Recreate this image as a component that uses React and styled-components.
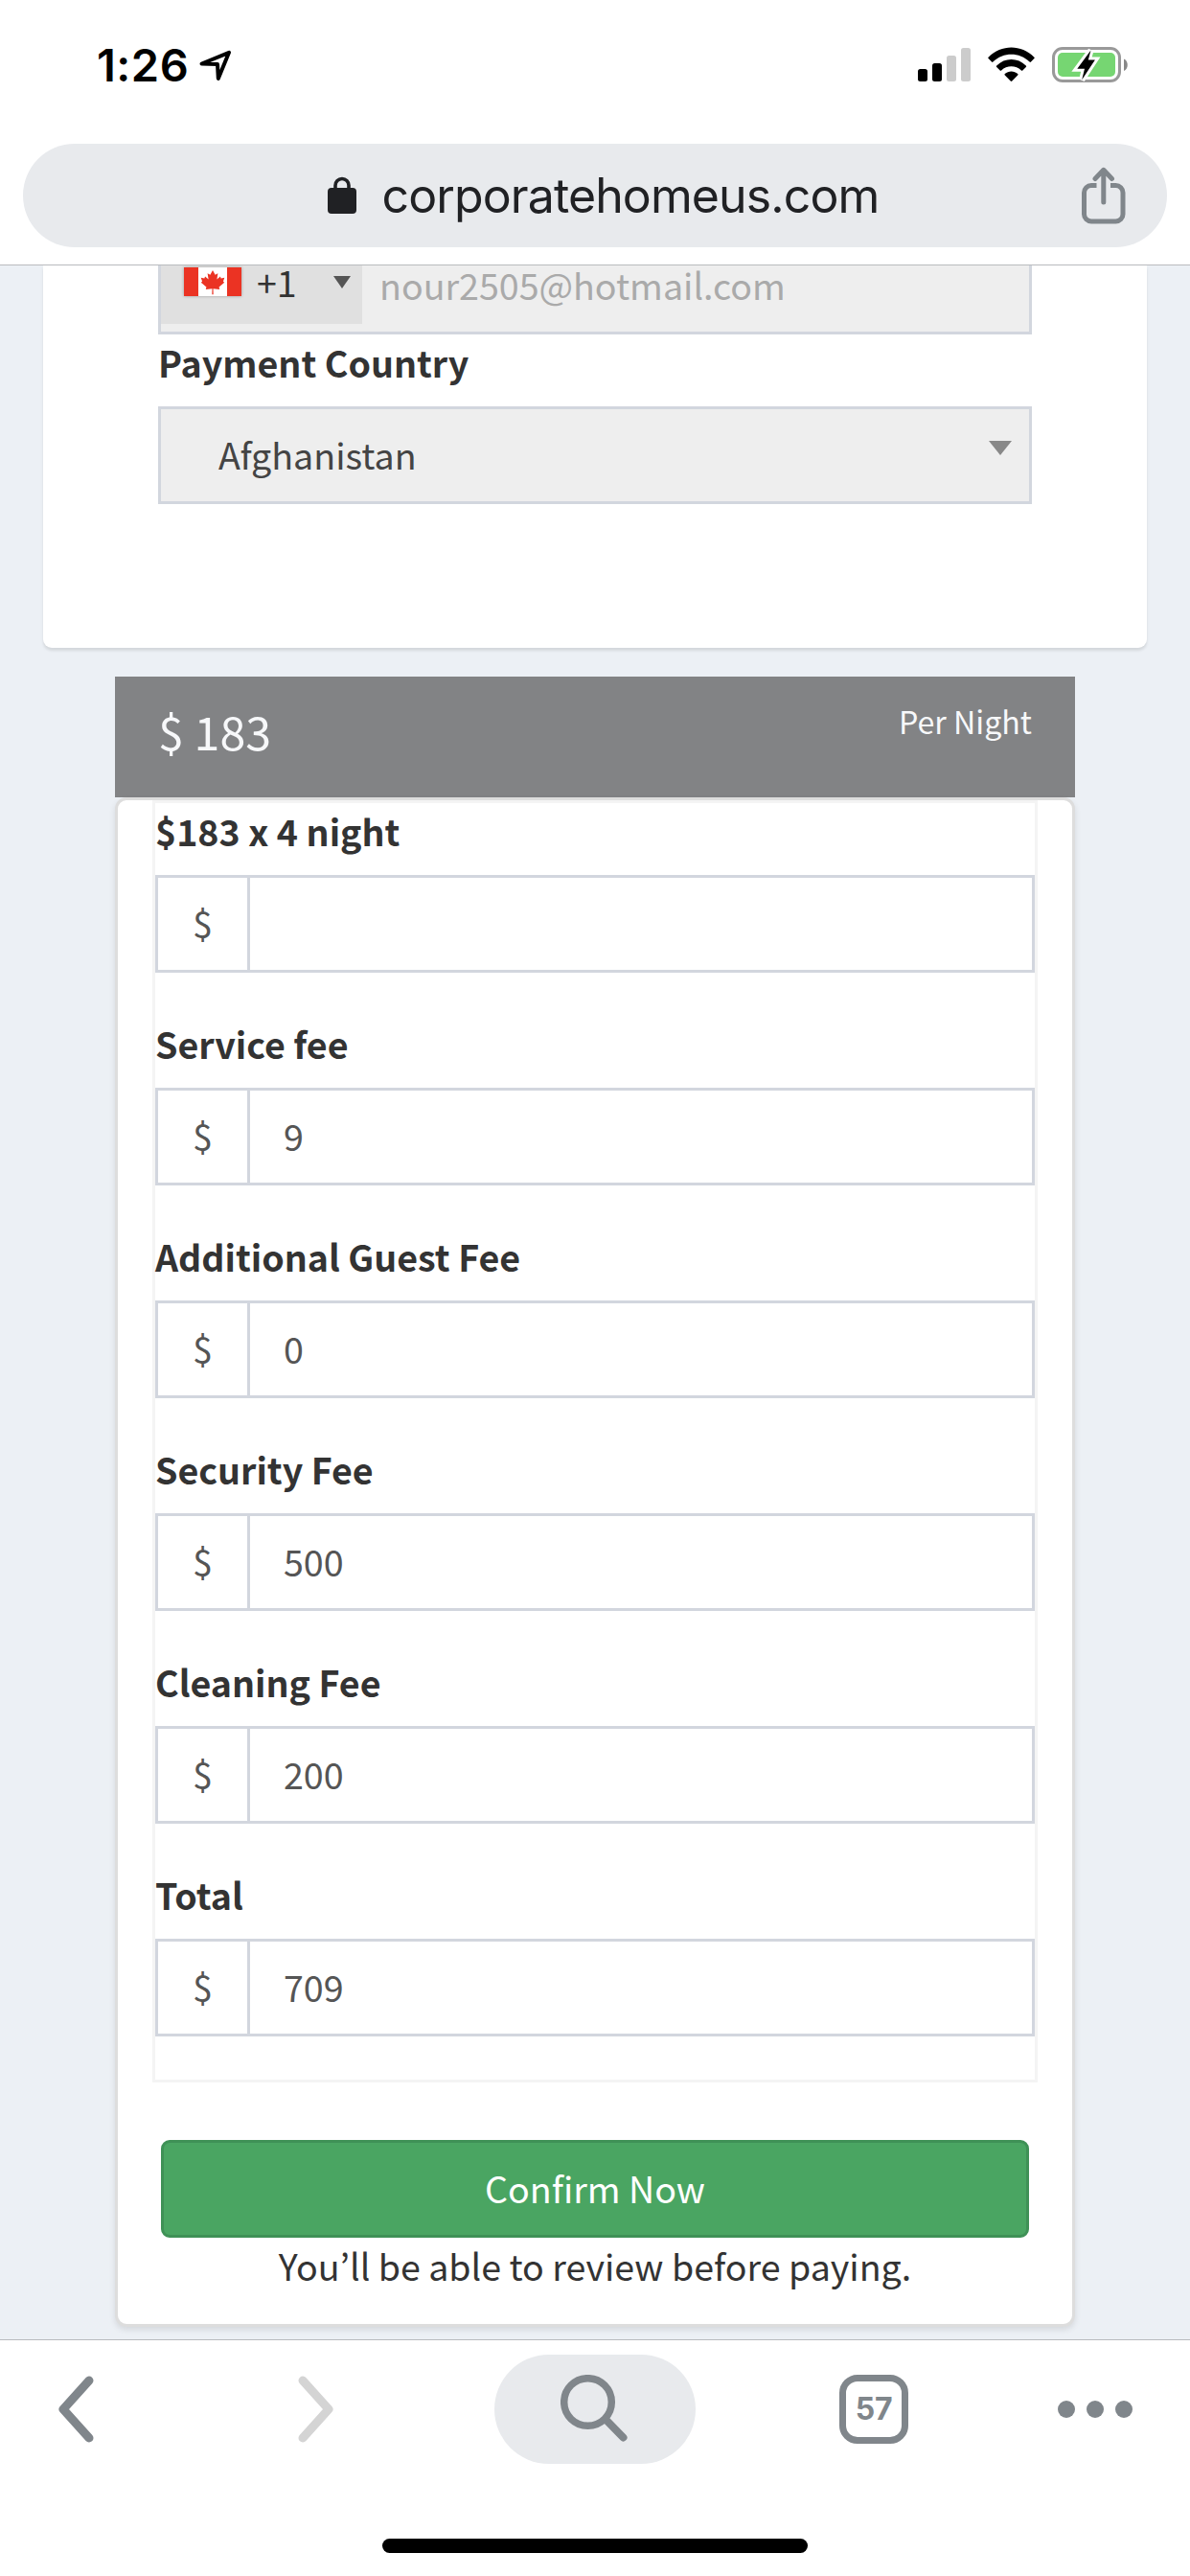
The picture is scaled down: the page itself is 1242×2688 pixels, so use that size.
import React from "react";
import styled, { createGlobalStyle } from "styled-components";

const GlobalStyle = createGlobalStyle`
  * { box-sizing: border-box; }
  body { margin: 0; background: #fff; }
  input, button, select { font: inherit; }
`;

const ui = `Inter, "Liberation Sans", sans-serif`;
const body = `"Noto Sans CJK KR", "Noto Sans", sans-serif`;

const Screen = styled.div`
  width: 1242px;
  height: 2688px;
  display: flex;
  flex-direction: column;
  overflow: hidden;
  background: #fff;
`;

const StatusBar = styled.header`
  height: 150px;
  flex: none;
  display: flex;
  justify-content: space-between;
  align-items: flex-start;
  padding: 44px 65px 0 101px;
`;

const TimeGroup = styled.div`
  display: flex;
  align-items: center;
  gap: 10px;
  height: 48px;
`;

const Time = styled.span`
  font: 600 47px/48px ${ui};
  letter-spacing: 0.5px;
  color: #000;
`;

const StatusIcons = styled.div`
  display: flex;
  align-items: flex-start;
  gap: 18px;
  padding-top: 5px;
  svg { display: block; }
`;

const AddressArea = styled.div`
  height: 127px;
  flex: none;
  padding: 0 24px;
  border-bottom: 1px solid #b9bbbe;
`;

const AddressBar = styled.div`
  height: 108px;
  border-radius: 54px;
  background: #e8eaed;
  display: grid;
  grid-template-columns: 1fr auto 1fr;
  align-items: center;
  padding: 0 43px 0 0;
`;

const Address = styled.div`
  grid-column: 2;
  display: flex;
  align-items: center;
  gap: 27px;
  padding-left: 60px;
`;

const Domain = styled.span`
  font: 400 50px/60px ${ui};
  letter-spacing: -0.9px;
  color: #202124;
`;

const ShareButton = styled.div`
  justify-self: end;
  display: flex;
`;

const Page = styled.main`
  height: 2164px;
  flex: none;
  overflow: hidden;
  background: #ecf0f5;
  font-family: ${body};
  color: #333;
`;

const ContactCard = styled.section`
  height: 399px;
  margin: 0 45px 30px;
  padding: 0 120px;
  background: #fff;
  border-radius: 0 0 9px 9px;
  box-shadow: 0 3px 3px rgba(0, 0, 0, 0.1);
`;

const PhoneField = styled.div`
  height: 72px;
  display: flex;
  align-items: flex-start;
  background: #eee;
  border: 3px solid #d2d6de;
  border-top: 0;
`;

const DialCode = styled.div`
  width: 210px;
  height: 61px;
  padding: 2px 12px 0 24px;
  display: flex;
  align-items: flex-start;
  background: #e0e0e0;
  font-size: 37.6px;
  line-height: 38px;
  svg {
    display: block;
    box-shadow: 0 0 3px rgba(0, 0, 0, 0.3);
  }
`;

const Code = styled.span`
  margin: -4px 0 0 16px;
  flex: 1;
`;

const Caret = styled.span`
  width: 0;
  height: 0;
  margin-top: ${(p) => p.$top}px;
  border: ${(p) => p.$half}px solid transparent;
  border-top: ${(p) => p.$tall}px solid ${(p) => p.$color};
  border-bottom: 0;
`;

const Placeholder = styled.span`
  padding-left: 18px;
  font-size: 37.6px;
  line-height: 40px;
  color: #aaa;
`;

const Label = styled.label`
  display: block;
  height: 75px;
  padding-top: 1px;
  font-size: 37.6px;
  line-height: 56px;
  font-weight: 700;
  color: #333;
`;

const CountrySelect = styled.div`
  height: 102px;
  display: flex;
  justify-content: space-between;
  align-items: flex-start;
  padding: 0 18px 0 60px;
  background: #eee;
  border: 3px solid #d2d6de;
  font-size: 37.6px;
  line-height: 94px;
  color: #444;
`;

const Quote = styled.section`
  width: 1002px;
  margin: 0 auto;
`;

const PriceBar = styled.div`
  height: 126px;
  display: flex;
  justify-content: space-between;
  align-items: flex-start;
  padding: 0 45px;
  background: #828385;
  color: #f7f8fa;
`;

const Price = styled.span`
  padding-top: 20px;
  font-size: 48.3px;
  line-height: 72px;
`;

const Unit = styled.span`
  padding-top: 22px;
  font-size: 32.2px;
  line-height: 48px;
`;

const FeeCard = styled.div`
  height: 1596px;
  padding: 0 36px;
  background: #fff;
  border: 3px solid #ddd;
  border-radius: 12px;
  box-shadow: 0 3px 6px rgba(0, 0, 0, 0.1);
`;

const FeeBox = styled.div`
  height: 1338px;
  border: 3px solid #f4f4f4;
`;

const Fee = styled.div`
  padding-bottom: 45px;
`;

const MoneyField = styled.div`
  height: 102px;
  display: flex;
  border: 3px solid #d2d6de;
  font-size: 37.6px;
  line-height: 94px;
  color: #555;
`;

const Currency = styled.span`
  width: 96px;
  border-right: 3px solid #d2d6de;
  text-align: center;
`;

const Amount = styled.span`
  padding-left: 35px;
`;

const Actions = styled.div`
  padding: 60px 9px 0;
  text-align: center;
  font-size: 37.6px;
`;

const ConfirmButton = styled.button`
  display: block;
  width: 100%;
  height: 102px;
  padding: 0 0 3px;
  background: #4aa562;
  border: 3px solid #3f9156;
  border-radius: 9px;
  color: #fff;
  font-size: 37.6px;
  line-height: 90px;
`;

const Hint = styled.p`
  margin: 1px 0 0;
  line-height: 56px;
`;

const Toolbar = styled.nav`
  height: 247px;
  flex: none;
  border-top: 1px solid #b9bbbe;
  display: flex;
  flex-direction: column;
  align-items: center;
  background: #fff;
`;

const ToolRow = styled.div`
  width: 100%;
  height: 114px;
  margin: 15px 0 78px;
  display: grid;
  grid-template-columns: 251px 205px 360px 228px 79px;
  align-items: center;
  justify-items: start;
  padding-left: 60px;
  svg { display: block; }
`;

const SearchPill = styled.div`
  width: 210px;
  height: 114px;
  border-radius: 57px;
  background: #e8eaed;
  display: flex;
  align-items: center;
  justify-content: center;
`;

const Tabs = styled.div`
  width: 72px;
  height: 72px;
  display: flex;
  align-items: center;
  justify-content: center;
  border: 7px solid #80868b;
  border-radius: 19px;
  font: 700 32px/34px ${ui};
  letter-spacing: -0.4px;
  color: #80868b;
`;

const HomeIndicator = styled.div`
  width: 444px;
  height: 15px;
  border-radius: 8px;
  background: #000;
`;

const LocationIcon = () => (
  <svg width="36" height="34" viewBox="0 0 36 34" fill="none">
    <path d="M3.500 15.500 32 3.800 20.800 31 20 16Z" stroke="#000" strokeWidth="4" strokeLinejoin="round" />
  </svg>
);

const SignalIcon = () => (
  <svg width="55" height="37" viewBox="0 0 55 37">
    <rect x="0" y="23" width="10" height="13" rx="2.5" />
    <rect x="15" y="17" width="10" height="19" rx="2.5" />
    <rect x="30" y="9" width="10" height="27" rx="2.5" fill="#ccc" />
    <rect x="45" y="1" width="10" height="35" rx="2.5" fill="#ccc" />
  </svg>
);

const WifiIcon = () => (
  <svg width="49" height="37" viewBox="0 0 49 37">
    <path d="M0.6 12.1a1 1 0 0 1 0-1.4C14-3 35-3 48.400 10.700a1 1 0 0 1 0 1.400L45 15.600a1 1 0 0 1-1.400 0C33 5.200 16 5.200 5.400 15.600a1 1 0 0 1-1.400 0Z" />
    <path d="M9.200 20.900a1 1 0 0 1 0-1.500c8.600-8.600 22-8.600 30.600 0a1 1 0 0 1 0 1.500l-3.500 3.500a1 1 0 0 1-1.400 0c-5.800-5.600-15-5.600-20.800 0a1 1 0 0 1-1.400 0Z" />
    <path d="M17.800 29.600a1 1 0 0 1 0-1.500c3.700-3.600 9.700-3.600 13.400 0a1 1 0 0 1 0 1.500l-5.900 6a1.100 1.100 0 0 1-1.600 0Z" />
  </svg>
);

const BatteryIcon = () => (
  <svg width="79" height="37" viewBox="0 0 79 37">
    <rect x="1.500" y="1.500" width="69" height="34" rx="9.500" fill="none" stroke="#999" strokeWidth="3" />
    <path d="M75 12.500c5 2 5 10.500 0 12.500Z" fill="#888" />
    <rect x="6" y="6" width="60" height="25" rx="5" fill="#76d672" />
    <path d="M40.500 3.500 26.300 22.700H34L31.200 34.300 44.900 13.400H37.800Z" fill="#000" stroke="#fff" strokeWidth="6" paintOrder="stroke" />
  </svg>
);

const LockIcon = () => (
  <svg width="30" height="40" viewBox="0 0 30 40">
    <path d="M8 14V9.500a7 7 0 0 1 14 0V14" fill="none" stroke="#202124" strokeWidth="3.600" />
    <rect x="0" y="12" width="30" height="27" rx="4" fill="#202124" />
  </svg>
);

const ShareIcon = () => (
  <svg width="46" height="60" viewBox="0 0 46 60" fill="none" stroke="#80868b" strokeWidth="5">
    <path d="M15.500 19.500H10a7.500 7.500 0 0 0-7.500 7.500V49.500A7.500 7.500 0 0 0 10 57H35.500A7.500 7.500 0 0 0 43 49.500V27a7.500 7.500 0 0 0-7.500-7.500H30" />
    <path d="M22.800 3.500V37M14 12.500 22.800 3.300 31.500 12.500" strokeLinecap="round" strokeLinejoin="round" />
  </svg>
);

const CanadaFlag = () => (
  <svg width="60" height="30" viewBox="0 0 60 30">
    <rect width="60" height="30" fill="#fff" />
    <path d="M0 0h15v30H0zM45 0h15v30H45z" fill="#eb3323" />
    <path d="m30 3 2.600 4.800 2.800-1.500-1 6.200 3.500-3 .8 1.900 3.600-.6-1.400 4 1.300 1-5.600 4.700.6 2.500-6.700-.8.200 6h-1.400l.2-6-6.700.8.600-2.500-5.600-4.700 1.300-1-1.400-4 3.600.6.800-1.900 3.500 3-1-6.200 2.800 1.500Z" fill="#eb3323" />
  </svg>
);

const Chevron = ({ color, flip }) => (
  <svg width="38" height="70" viewBox="0 0 38 70" fill="none">
    <path
      d={flip ? "M5 5 32 35 5 65" : "M33 5 6 35 33 65"}
      stroke={color}
      strokeWidth="9"
      strokeLinecap="round"
      strokeLinejoin="round"
    />
  </svg>
);

const SearchIcon = () => (
  <svg width="72" height="72" viewBox="0 0 72 72" fill="none" stroke="#80868b">
    <circle cx="28.500" cy="28.500" r="24.800" strokeWidth="7.500" />
    <path d="M47 46.500 65.500 65.500" strokeWidth="8" strokeLinecap="round" />
  </svg>
);

const MoreIcon = () => (
  <svg width="79" height="18" viewBox="0 0 79 18" fill="#80868b">
    <circle cx="9" cy="9" r="9" />
    <circle cx="39" cy="9" r="9" />
    <circle cx="69" cy="9" r="9" />
  </svg>
);

const fees = [
  ["$183 x 4 night", ""],
  ["Service fee", "9"],
  ["Additional Guest Fee", "0"],
  ["Security Fee", "500"],
  ["Cleaning Fee", "200"],
  ["Total", "709"],
];

export default function App() {
  return (
    <Screen>
      <GlobalStyle />
      <StatusBar>
        <TimeGroup>
          <Time>1:26</Time>
          <LocationIcon />
        </TimeGroup>
        <StatusIcons>
          <SignalIcon />
          <WifiIcon />
          <BatteryIcon />
        </StatusIcons>
      </StatusBar>
      <AddressArea>
        <AddressBar>
          <Address>
            <LockIcon />
            <Domain>corporatehomeus.com</Domain>
          </Address>
          <ShareButton>
            <ShareIcon />
          </ShareButton>
        </AddressBar>
      </AddressArea>
      <Page>
        <ContactCard>
          <PhoneField>
            <DialCode>
              <CanadaFlag />
              <Code>+1</Code>
              <Caret $top={9} $half={9} $tall={13} $color="#555" />
            </DialCode>
            <Placeholder>nour2505@hotmail.com</Placeholder>
          </PhoneField>
          <Label>Payment Country</Label>
          <CountrySelect>
            Afghanistan
            <Caret $top={33} $half={12} $tall={15} $color="#888" />
          </CountrySelect>
        </ContactCard>
        <Quote>
          <PriceBar>
            <Price>$ 183</Price>
            <Unit>Per Night</Unit>
          </PriceBar>
          <FeeCard>
            <FeeBox>
              {fees.map(([name, amount]) => (
                <Fee key={name}>
                  <Label>{name}</Label>
                  <MoneyField>
                    <Currency>$</Currency>
                    <Amount>{amount}</Amount>
                  </MoneyField>
                </Fee>
              ))}
            </FeeBox>
            <Actions>
              <ConfirmButton>Confirm Now</ConfirmButton>
              <Hint>You’ll be able to review before paying.</Hint>
            </Actions>
          </FeeCard>
        </Quote>
      </Page>
      <Toolbar>
        <ToolRow>
          <Chevron color="#80868b" />
          <Chevron color="#d4d4d4" flip />
          <SearchPill>
            <SearchIcon />
          </SearchPill>
          <Tabs>57</Tabs>
          <MoreIcon />
        </ToolRow>
        <HomeIndicator />
      </Toolbar>
    </Screen>
  );
}
